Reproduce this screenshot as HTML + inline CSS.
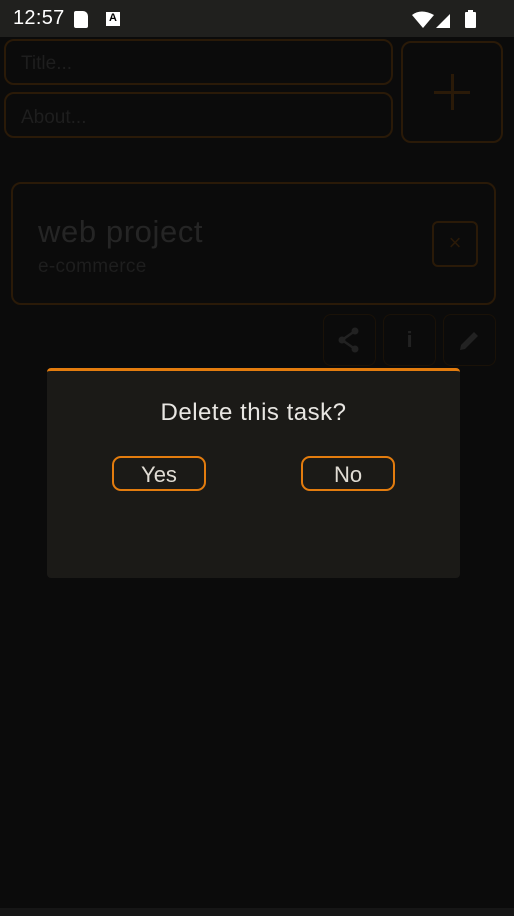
<!DOCTYPE html>
<html><head><meta charset="utf-8"><style>
body{margin:0;width:514px;height:916px;background:#0b0b0b;position:relative;overflow:hidden;font-family:"Liberation Sans",Roboto,sans-serif}
.a{position:absolute;box-sizing:border-box}
.o{border:2px solid #2a1a08}
</style></head><body>
<div class="a" style="left:0;top:0;width:514px;height:37px;background:#20201e"></div>
<div class="a" style="left:13px;top:7px;color:#fff;font-size:20px;letter-spacing:0.3px">12:57</div>
<div class="a" style="left:74px;top:11px;width:14px;height:17px;background:#fff;border-radius:2px 5px 2px 2px"></div>
<div class="a" style="left:106px;top:12px;width:14px;height:14px;background:#fff;color:#000;font-size:11px;font-weight:bold;text-align:center;line-height:13px">A</div>
<svg class="a" style="left:410px;top:10px" width="72" height="19" viewBox="0 0 72 19"><path d="M2 5 Q11 -2 24 5 L13 18Z" fill="#fff"/><path d="M26 18 L40 4 L40 18Z" fill="#fff"/><rect x="55" y="2" width="11" height="16" rx="1" fill="#fff"/><rect x="58" y="0" width="5" height="3" fill="#fff"/></svg>

<div class="a o" style="left:4px;top:39px;width:389px;height:46px;border-radius:10px"></div>
<div class="a" style="left:21px;top:53px;color:#1e1e1e;font-size:19px">Title...</div>
<div class="a o" style="left:4px;top:92px;width:389px;height:46px;border-radius:10px"></div>
<div class="a" style="left:21px;top:107px;color:#1e1e1e;font-size:19px">About...</div>
<div class="a o" style="left:401px;top:41px;width:102px;height:102px;border-radius:10px"></div>
<div class="a" style="left:434px;top:91px;width:36px;height:3px;background:#2a1a08"></div>
<div class="a" style="left:451px;top:74px;width:3px;height:36px;background:#2a1a08"></div>

<div class="a o" style="left:11px;top:182px;width:485px;height:123px;border-radius:10px"></div>
<div class="a" style="left:38px;top:214px;color:#252525;font-size:31px;letter-spacing:0.6px">web project</div>
<div class="a" style="left:38px;top:256px;color:#1e1e1e;font-size:19px;letter-spacing:0.3px">e-commerce</div>
<div class="a o" style="left:432px;top:221px;width:46px;height:46px;border-radius:6px;color:#2a1a08;font-size:22px;text-align:center;line-height:40px">×</div>

<div class="a" style="left:323px;top:314px;width:53px;height:52px;border:1px solid #1a1208;border-radius:8px"></div>
<svg class="a" style="left:336px;top:326px" width="26" height="28" viewBox="0 0 26 28"><circle cx="19" cy="5" r="3.5" fill="#222"/><circle cx="6" cy="14" r="3.5" fill="#222"/><circle cx="19" cy="23" r="3.5" fill="#222"/><path d="M19 5L6 14L19 23" stroke="#222" stroke-width="2.5" fill="none"/></svg>
<div class="a" style="left:383px;top:314px;width:53px;height:52px;border:1px solid #1a1208;border-radius:8px;color:#222;font-size:22px;font-weight:bold;text-align:center;line-height:50px">i</div>
<div class="a" style="left:443px;top:314px;width:53px;height:52px;border:1px solid #1a1208;border-radius:8px"></div>
<svg class="a" style="left:458px;top:328px" width="24" height="24" viewBox="0 0 24 24"><path d="M2 22 L3 17 L16 4 L20 8 L7 21Z" fill="#222"/></svg>

<div class="a" style="left:47px;top:368px;width:413px;height:210px;background:#1b1a17;border-top:3px solid #e37c0e;border-radius:4px"></div>
<div class="a" style="left:47px;top:399px;width:413px;text-align:center;color:#e8e6e2;font-size:24px;letter-spacing:0.5px">Delete this task?</div>
<div class="a" style="left:112px;top:456px;width:94px;height:35px;border:2px solid #e37c0e;border-radius:9px;color:#e0dcd4;font-size:22px;text-align:center;line-height:33px">Yes</div>
<div class="a" style="left:301px;top:456px;width:94px;height:35px;border:2px solid #e37c0e;border-radius:9px;color:#e0dcd4;font-size:22px;text-align:center;line-height:33px">No</div>
<div class="a" style="left:0;top:908px;width:514px;height:8px;background:#161616"></div>
</body></html>
